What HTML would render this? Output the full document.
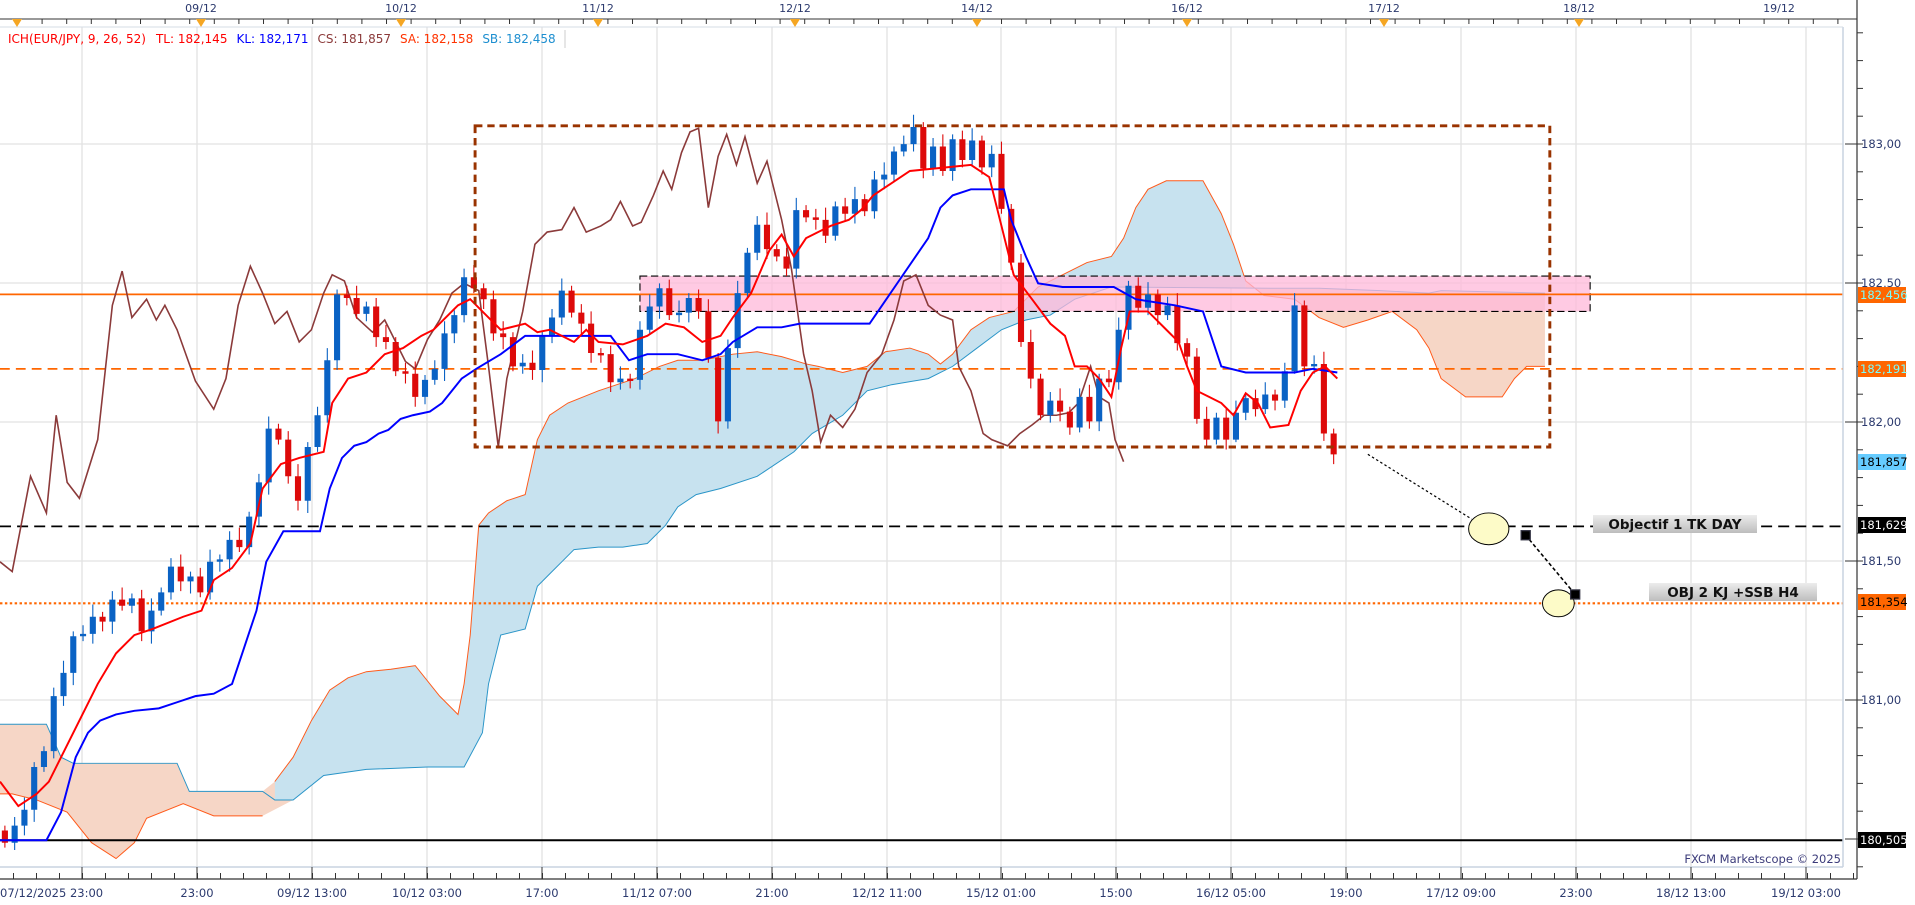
<!DOCTYPE html>
<html><head><meta charset="utf-8"><style>
html,body{margin:0;padding:0;background:#fff;width:1915px;height:905px;overflow:hidden}
svg{display:block}
text{font-family:"DejaVu Sans","Liberation Sans",sans-serif}
</style></head><body>
<svg width="1915" height="905" viewBox="0 0 1915 905" xmlns="http://www.w3.org/2000/svg">
<defs>
<clipPath id="cb"><rect x="225" y="0" width="795" height="741"/></clipPath>
<clipPath id="cs"><rect x="1020" y="0" width="300" height="741"/></clipPath>
<pattern id="rt" x="1857" y="143.5" width="6" height="27.8" patternUnits="userSpaceOnUse"><rect x="0" y="0" width="6" height="1" fill="#333"/></pattern>
<pattern id="bt" x="13" y="873" width="23" height="6" patternUnits="userSpaceOnUse"><rect x="0" y="0" width="1" height="6" fill="#333"/></pattern>
<pattern id="tt" x="17" y="19" width="24.6" height="5" patternUnits="userSpaceOnUse"><rect x="0" y="0" width="1" height="5" fill="#333"/></pattern>
<linearGradient id="g" x1="0" y1="0" x2="0" y2="1"><stop offset="0" stop-color="#ececec"/><stop offset="1" stop-color="#bdbdbd"/></linearGradient>
</defs>
<rect width="1915" height="905" fill="#fff"/>
<!-- grid -->
<g stroke="#e2e2e2" stroke-width="1.3">
<line x1="82" y1="27" x2="82" y2="867"/><line x1="197" y1="27" x2="197" y2="867"/><line x1="312" y1="27" x2="312" y2="867"/><line x1="427" y1="27" x2="427" y2="867"/><line x1="542" y1="27" x2="542" y2="867"/><line x1="657" y1="27" x2="657" y2="867"/><line x1="772" y1="27" x2="772" y2="867"/><line x1="887" y1="27" x2="887" y2="867"/><line x1="1001" y1="27" x2="1001" y2="867"/><line x1="1116" y1="27" x2="1116" y2="867"/><line x1="1231" y1="27" x2="1231" y2="867"/><line x1="1346" y1="27" x2="1346" y2="867"/><line x1="1461" y1="27" x2="1461" y2="867"/><line x1="1576" y1="27" x2="1576" y2="867"/><line x1="1691" y1="27" x2="1691" y2="867"/><line x1="1806" y1="27" x2="1806" y2="867"/>
<line x1="0" y1="144" x2="1843" y2="144"/><line x1="0" y1="283" x2="1843" y2="283"/><line x1="0" y1="422" x2="1843" y2="422"/><line x1="0" y1="561" x2="1843" y2="561"/><line x1="0" y1="700" x2="1843" y2="700"/>
</g>
<g transform="scale(1.2213)">
<!-- left salmon cloud -->
<polygon fill="#f6d6c6" points="0,593 38,593 50,620 60,625 145,625 155,648 215,648 225,640 240,635 240,655 215,668 175,668 150,658 120,670 110,690 95,703 75,690 55,665 30,655 10,650 0,650"/>
<polyline fill="none" stroke="#ff5a1a" stroke-width="0.8" points="0,650 10,650 30,655 55,665 75,690 95,703 110,690 120,670 150,658 175,668 215,668"/>
<polyline fill="none" stroke="#2a95c8" stroke-width="0.8" points="0,593 38,593 50,620 60,625 145,625 155,648 215,648 225,655 240,655"/>
<!-- main cloud -->
<polygon clip-path="url(#cb)" fill="#c7e2ef" points="225,640 240,620 255,590 270,565 285,555 300,550 320,548 340,545 360,570 375,585 380,560 385,520 392,430 400,420 415,410 430,405 440,360 450,340 465,330 490,320 505,315 520,310 540,300 555,295 575,295 600,290 620,288 640,292 660,298 670,300 690,305 710,300 725,288 745,285 760,290 770,298 780,290 795,270 810,260 830,255 850,235 870,225 890,215 910,210 920,195 930,170 940,155 955,148 985,148 1000,175 1010,200 1020,230 1035,242 1060,245 1080,260 1100,268 1120,262 1140,255 1160,270 1170,285 1180,310 1200,325 1230,325 1240,310 1250,300 1265,300 1265,240 1180,238 1170,240 1130,238 1080,236 1040,236 910,235 880,245 860,258 840,262 820,270 800,285 780,300 760,310 730,315 710,320 690,340 665,355 650,370 620,390 590,400 570,405 555,415 545,430 530,445 510,448 490,448 470,450 460,460 450,470 440,480 430,515 410,520 400,560 395,600 380,628 350,628 300,630 265,635 240,655 225,655"/>
<polygon clip-path="url(#cs)" fill="#f6d6c6" points="225,640 240,620 255,590 270,565 285,555 300,550 320,548 340,545 360,570 375,585 380,560 385,520 392,430 400,420 415,410 430,405 440,360 450,340 465,330 490,320 505,315 520,310 540,300 555,295 575,295 600,290 620,288 640,292 660,298 670,300 690,305 710,300 725,288 745,285 760,290 770,298 780,290 795,270 810,260 830,255 850,235 870,225 890,215 910,210 920,195 930,170 940,155 955,148 985,148 1000,175 1010,200 1020,230 1035,242 1060,245 1080,260 1100,268 1120,262 1140,255 1160,270 1170,285 1180,310 1200,325 1230,325 1240,310 1250,300 1265,300 1265,240 1180,238 1170,240 1130,238 1080,236 1040,236 910,235 880,245 860,258 840,262 820,270 800,285 780,300 760,310 730,315 710,320 690,340 665,355 650,370 620,390 590,400 570,405 555,415 545,430 530,445 510,448 490,448 470,450 460,460 450,470 440,480 430,515 410,520 400,560 395,600 380,628 350,628 300,630 265,635 240,655 225,655"/>
<polyline fill="none" stroke="#ff5a1a" stroke-width="0.8" points="225,640 240,620 255,590 270,565 285,555 300,550 320,548 340,545 360,570 375,585 380,560 385,520 392,430 400,420 415,410 430,405 440,360 450,340 465,330 490,320 505,315 520,310 540,300 555,295 575,295 600,290 620,288 640,292 660,298 670,300 690,305 710,300 725,288 745,285 760,290 770,298 780,290 795,270 810,260 830,255 850,235 870,225 890,215 910,210 920,195 930,170 940,155 955,148 985,148 1000,175 1010,200 1020,230 1035,242 1060,245 1080,260 1100,268 1120,262 1140,255 1160,270 1170,285 1180,310 1200,325 1230,325 1240,310 1250,300 1265,300"/>
<polyline fill="none" stroke="#2a95c8" stroke-width="0.8" points="225,655 240,655 265,635 300,630 350,628 380,628 395,600 400,560 410,520 430,515 440,480 450,470 460,460 470,450 490,448 510,448 530,445 545,430 555,415 570,405 590,400 620,390 650,370 665,355 690,340 710,320 730,315 760,310 780,300 800,285 820,270 840,262 860,258 880,245 910,235 1040,236 1080,236 1130,238 1170,240 1180,238 1265,240"/>
<!-- pink zone -->
<rect x="524" y="226" width="778" height="29" fill="#ffb8da" fill-opacity="0.75" stroke="#000" stroke-width="0.9" stroke-dasharray="6,3"/>
<!-- horizontal levels -->
<line x1="0" y1="241" x2="1509" y2="241" stroke="#ff6600" stroke-width="1.4"/>
<line x1="0" y1="302" x2="1509" y2="302" stroke="#ff6600" stroke-width="1.4" stroke-dasharray="8,5"/>
<line x1="0" y1="431" x2="1509" y2="431" stroke="#000" stroke-width="1.4" stroke-dasharray="9,5"/>
<line x1="0" y1="494" x2="1509" y2="494" stroke="#ff6600" stroke-width="1.8" stroke-dasharray="2,2"/>
<line x1="0" y1="688" x2="1509" y2="688" stroke="#000" stroke-width="1.6"/>
<!-- chikou -->
<polyline fill="none" stroke="#8b3a3a" stroke-width="1.3" points="0,460 10,468 25,390 38,420 46,340 55,395 65,408 80,360 92,250 100,222 108,260 120,245 128,262 135,250 145,270 160,312 175,335 185,310 195,250 205,218 215,240 225,265 235,255 245,280 255,270 265,240 272,225 282,230 292,260 305,272 315,262 325,282 332,296 340,302 350,278 360,262 370,240 380,232 392,238 400,300 408,366 415,310 428,255 438,200 448,190 460,188 470,170 480,190 492,185 500,180 508,165 518,185 525,182 535,160 543,140 550,155 558,125 565,108 572,105 580,170 588,128 595,110 603,135 610,112 620,150 628,132 640,180 648,220 658,290 665,320 672,362 680,340 690,350 700,335 710,305 722,290 732,262 740,230 750,225 760,250 770,258 780,262 785,300 795,320 805,355 812,360 825,365 835,355 845,348 855,340 865,340 875,338 883,330 893,300 900,325 908,330 913,360 920,378"/>
<!-- candles -->
<path fill="none" stroke="#0a62c4" stroke-width="0.9" d="M12,669V696M20,653V684M28,624V673M36,611V632M44,563V621M52,541V578M60,517V561M68,512V525M76,495V527M92,484V519M108,486V502M124,490V527M132,481V504M140,457V491M156,468V486M172,450V491M180,454V468M188,435V468M204,419V454M212,388V431M220,341V405M252,362V420M260,333V370M268,285V346M276,237V303M300,247V263M348,307V331M356,295V315M364,263V312M372,254V281M380,220V264M428,290V306M444,271V313M452,253V281M460,228V266M508,300V319M524,263V319M532,241V274M540,232V261M556,246V264M564,240V264M596,278V351M604,230V293M612,203V244M620,177V213M652,162V228M684,165V197M700,153V183M716,140V179M724,133V155M732,120V149M740,111V128M748,94V124M764,113V144M780,110V148M796,105V135M812,119V145M860,321V346M884,318V354M900,306V353M916,260V319M924,230V278M940,231V258M956,243V262M996,338V364M1012,328V362M1020,322V344M1036,313V339M1052,297V334M1060,240V306M1076,291V306"/>
<path fill="#0a62c4" d="M9.5,676h5V690h-5zM17.5,663h5V676h-5zM25.5,628h5V663h-5zM33.5,615h5V628h-5zM41.5,570h5V615h-5zM49.5,551h5V570h-5zM57.5,521h5V551h-5zM65.5,519h5V521h-5zM73.5,505h5V519h-5zM89.5,491h5V509h-5zM105.5,490h5V496h-5zM121.5,500h5V517h-5zM129.5,485h5V500h-5zM137.5,464h5V485h-5zM153.5,472h5V476h-5zM169.5,460h5V485h-5zM177.5,458h5V460h-5zM185.5,442h5V458h-5zM201.5,423h5V448h-5zM209.5,395h5V423h-5zM217.5,351h5V395h-5zM249.5,366h5V410h-5zM257.5,340h5V366h-5zM265.5,295h5V340h-5zM273.5,241h5V295h-5zM297.5,251h5V257h-5zM345.5,311h5V325h-5zM353.5,302h5V311h-5zM361.5,273h5V302h-5zM369.5,258h5V273h-5zM377.5,227h5V258h-5zM425.5,297h5V300h-5zM441.5,275h5V303h-5zM449.5,260h5V275h-5zM457.5,238h5V260h-5zM505.5,310h5V313h-5zM521.5,270h5V311h-5zM529.5,251h5V270h-5zM537.5,236h5V251h-5zM553.5,256h5V258h-5zM561.5,244h5V256h-5zM593.5,285h5V345h-5zM601.5,240h5V285h-5zM609.5,207h5V240h-5zM617.5,184h5V207h-5zM649.5,172h5V220h-5zM681.5,169h5V193h-5zM697.5,163h5V175h-5zM713.5,147h5V173h-5zM721.5,143h5V147h-5zM729.5,124h5V143h-5zM737.5,118h5V124h-5zM745.5,104h5V118h-5zM761.5,120h5V138h-5zM777.5,114h5V140h-5zM793.5,115h5V131h-5zM809.5,126h5V137h-5zM857.5,328h5V340h-5zM881.5,325h5V350h-5zM897.5,310h5V345h-5zM913.5,270h5V313h-5zM921.5,234h5V270h-5zM937.5,241h5V252h-5zM953.5,250h5V258h-5zM993.5,342h5V360h-5zM1009.5,338h5V360h-5zM1017.5,326h5V338h-5zM1033.5,323h5V335h-5zM1049.5,304h5V328h-5zM1057.5,250h5V304h-5zM1073.5,298h5V300h-5z"/>
<path fill="none" stroke="#dd0a0a" stroke-width="0.9" d="M4,676V694M84,501V517M100,481V500M116,483V525M148,454V484M164,465V489M196,432V452M228,347V364M236,353V396M244,380V418M284,234V250M292,234V261M308,244V284M316,266V286M324,276V308M332,297V314M340,296V333M388,217V240M396,232V253M404,238V279M412,263V286M420,272V304M436,287V311M468,234V260M476,249V275M484,255V297M492,285V297M500,283V321M516,306V318M548,229V262M572,237V261M580,245V297M588,289V355M628,174V212M636,200V214M644,203V226M660,168V182M668,171V188M676,170V199M692,162V181M708,159V177M756,100V146M772,110V144M788,107V137M804,111V143M820,116V175M828,167V221M836,208V284M844,270V318M852,306V344M868,318V345M876,333V356M892,315V351M908,303V317M932,227V256M948,237V266M964,240V287M972,277V300M980,285V347M988,333V366M1004,335V368M1028,319V341M1044,319V336M1068,246V308M1084,288V361M1092,351V380"/>
<path fill="#dd0a0a" d="M1.5,680h5V690h-5zM81.5,505h5V509h-5zM97.5,491h5V496h-5zM113.5,490h5V517h-5zM145.5,464h5V476h-5zM161.5,472h5V485h-5zM193.5,442h5V448h-5zM225.5,351h5V360h-5zM233.5,360h5V390h-5zM241.5,390h5V410h-5zM281.5,241h5V244h-5zM289.5,244h5V257h-5zM305.5,251h5V276h-5zM313.5,276h5V280h-5zM321.5,280h5V304h-5zM329.5,304h5V306h-5zM337.5,306h5V325h-5zM385.5,227h5V236h-5zM393.5,236h5V245h-5zM401.5,245h5V273h-5zM409.5,273h5V276h-5zM417.5,276h5V300h-5zM433.5,297h5V303h-5zM465.5,238h5V256h-5zM473.5,256h5V265h-5zM481.5,265h5V289h-5zM489.5,289h5V291h-5zM497.5,290h5V313h-5zM513.5,310h5V312h-5zM545.5,236h5V258h-5zM569.5,244h5V255h-5zM577.5,255h5V293h-5zM585.5,293h5V345h-5zM625.5,184h5V204h-5zM633.5,204h5V210h-5zM641.5,210h5V220h-5zM657.5,172h5V178h-5zM665.5,178h5V180h-5zM673.5,180h5V193h-5zM689.5,169h5V175h-5zM705.5,163h5V173h-5zM753.5,104h5V138h-5zM769.5,120h5V140h-5zM785.5,114h5V131h-5zM801.5,115h5V137h-5zM817.5,126h5V171h-5zM825.5,171h5V215h-5zM833.5,215h5V280h-5zM841.5,280h5V310h-5zM849.5,310h5V340h-5zM865.5,328h5V337h-5zM873.5,337h5V350h-5zM889.5,325h5V345h-5zM905.5,310h5V313h-5zM929.5,234h5V252h-5zM945.5,241h5V258h-5zM961.5,250h5V281h-5zM969.5,281h5V292h-5zM977.5,292h5V343h-5zM985.5,343h5V360h-5zM1001.5,342h5V360h-5zM1025.5,326h5V335h-5zM1041.5,323h5V328h-5zM1065.5,250h5V300h-5zM1081.5,298h5V355h-5zM1089.5,355h5V372h-5z"/>
<!-- kijun -->
<polyline fill="none" stroke="#0000ff" stroke-width="1.6" points="0,688 38,688 50,665 62,620 72,600 82,590 95,585 110,582 130,580 145,575 160,570 175,568 190,560 200,530 210,500 218,460 232,435 262,435 270,400 280,375 290,365 300,362 310,355 318,352 328,343 338,340 352,337 362,330 378,310 390,302 410,290 430,275 500,275 515,295 530,290 555,290 575,295 590,290 600,280 620,268 640,268 655,265 712,265 760,195 770,170 780,160 795,155 822,155 828,180 840,210 850,232 870,235 912,235 930,245 962,250 985,255 1000,300 1020,305 1060,305 1075,302 1095,305"/>
<!-- tenkan -->
<polyline fill="none" stroke="#ff0000" stroke-width="1.6" points="0,640 15,660 30,650 40,640 50,620 65,590 80,560 95,535 110,520 125,515 150,505 165,500 175,475 190,465 205,445 215,400 230,380 245,375 265,370 272,330 285,310 300,305 315,290 330,285 345,275 355,270 375,250 385,245 400,260 410,270 430,265 440,272 450,270 470,280 480,270 490,280 510,282 530,275 545,265 560,268 575,280 590,275 600,260 615,240 630,205 640,192 650,210 660,195 670,190 680,185 695,180 705,172 715,160 730,150 745,140 795,135 810,145 820,185 830,225 845,245 860,265 872,275 880,300 890,300 900,310 910,325 918,285 925,255 940,255 955,270 965,280 972,300 980,320 990,325 1000,330 1010,340 1020,322 1030,330 1040,350 1055,348 1065,320 1075,305 1085,300 1095,310"/>
<!-- brown box -->
<rect x="389" y="103" width="880" height="263" fill="none" stroke="#993300" stroke-width="2.4" stroke-dasharray="6,4"/>
<!-- projections -->
<line x1="1120" y1="372" x2="1205" y2="425" stroke="#000" stroke-width="1" stroke-dasharray="2,2"/>
<ellipse cx="1219" cy="433" rx="16.5" ry="13" fill="#fdfbc8" stroke="#000" stroke-width="0.8"/>
<line x1="1249" y1="438" x2="1290" y2="487" stroke="#000" stroke-width="1.3" stroke-dasharray="3,2"/>
<ellipse cx="1276" cy="494" rx="13" ry="11" fill="#fdfbc8" stroke="#000" stroke-width="0.8"/>
<rect x="1245.5" y="434.5" width="7.5" height="7.5" fill="#000" stroke="#334"/>
<rect x="1286" y="483" width="7.5" height="7.5" fill="#000" stroke="#334"/>
</g>
<!-- annotation labels -->
<rect x="1593" y="515" width="164" height="18" fill="url(#g)"/>
<text x="1675" y="529" text-anchor="middle" font-size="13.5" font-weight="bold" fill="#111">Objectif 1 TK DAY</text>
<rect x="1649" y="583" width="168" height="18" fill="url(#g)"/>
<text x="1733" y="597" text-anchor="middle" font-size="13.5" font-weight="bold" fill="#111">OBJ 2 KJ +SSB H4</text>
<!-- frame -->
<line x1="1843" y1="27" x2="1843" y2="867" stroke="#c9d3e0" stroke-width="1.5"/>
<line x1="0" y1="867" x2="1843" y2="867" stroke="#c9d3e0" stroke-width="1.5"/>
<line x1="1857" y1="0" x2="1857" y2="879" stroke="#333" stroke-width="1.2"/>
<line x1="0" y1="879" x2="1857" y2="879" stroke="#333" stroke-width="1.2"/>
<line x1="0" y1="19" x2="1857" y2="19" stroke="#333" stroke-width="1"/>
<line x1="0" y1="27" x2="1843" y2="27" stroke="#d6dce6" stroke-width="1"/>
<!-- ticks -->
<rect x="1857" y="30" width="6" height="845" fill="url(#rt)"/>
<rect x="0" y="873" width="1857" height="6" fill="url(#bt)"/>
<rect x="0" y="19" width="1857" height="5" fill="url(#tt)"/>
<g stroke="#333" stroke-width="1">
<line x1="1845" y1="144" x2="1857" y2="144"/><line x1="1845" y1="283" x2="1857" y2="283"/><line x1="1845" y1="422" x2="1857" y2="422"/><line x1="1845" y1="561" x2="1857" y2="561"/><line x1="1845" y1="700" x2="1857" y2="700"/><line x1="1845" y1="839" x2="1857" y2="839"/>
<line x1="82" y1="867" x2="82" y2="879"/><line x1="197" y1="867" x2="197" y2="879"/><line x1="312" y1="867" x2="312" y2="879"/><line x1="427" y1="867" x2="427" y2="879"/><line x1="542" y1="867" x2="542" y2="879"/><line x1="657" y1="867" x2="657" y2="879"/><line x1="772" y1="867" x2="772" y2="879"/><line x1="887" y1="867" x2="887" y2="879"/><line x1="1001" y1="867" x2="1001" y2="879"/><line x1="1116" y1="867" x2="1116" y2="879"/><line x1="1231" y1="867" x2="1231" y2="879"/><line x1="1346" y1="867" x2="1346" y2="879"/><line x1="1461" y1="867" x2="1461" y2="879"/><line x1="1576" y1="867" x2="1576" y2="879"/><line x1="1691" y1="867" x2="1691" y2="879"/><line x1="1806" y1="867" x2="1806" y2="879"/>
</g>
<!-- top dates -->
<g font-size="11" fill="#2c3a6e" text-anchor="middle">
<text x="201" y="12">09/12</text><text x="401" y="12">10/12</text><text x="598" y="12">11/12</text><text x="795" y="12">12/12</text><text x="977" y="12">14/12</text><text x="1187" y="12">16/12</text><text x="1384" y="12">17/12</text><text x="1579" y="12">18/12</text><text x="1779" y="12">19/12</text>
</g>
<g fill="#f5a623">
<polygon points="12,19 22,19 17,27"/><polygon points="196,19 206,19 201,27"/><polygon points="396,19 406,19 401,27"/><polygon points="593,19 603,19 598,27"/><polygon points="790,19 800,19 795,27"/><polygon points="972,19 982,19 977,27"/><polygon points="1182,19 1192,19 1187,27"/><polygon points="1379,19 1389,19 1384,27"/><polygon points="1574,19 1584,19 1579,27"/>
</g>
<!-- legend -->
<text x="8" y="43" font-size="12"><tspan fill="#ff0000">ICH(EUR/JPY, 9, 26, 52)</tspan><tspan fill="#ff0000" dx="10">TL: 182,145</tspan><tspan fill="#0000ff" dx="9">KL: 182,171</tspan><tspan fill="#8b3a3a" dx="9">CS: 181,857</tspan><tspan fill="#ff3300" dx="9">SA: 182,158</tspan><tspan fill="#1e8fd0" dx="9">SB: 182,458</tspan></text>
<line x1="565" y1="30" x2="565" y2="48" stroke="#ccc"/>
<!-- bottom labels -->
<g font-size="11.5" fill="#2c3a6e" text-anchor="middle">
<text x="0" y="897" text-anchor="start">07/12/2025 23:00</text>
<text x="197" y="897">23:00</text><text x="312" y="897">09/12 13:00</text><text x="427" y="897">10/12 03:00</text><text x="542" y="897">17:00</text><text x="657" y="897">11/12 07:00</text><text x="772" y="897">21:00</text><text x="887" y="897">12/12 11:00</text><text x="1001" y="897">15/12 01:00</text><text x="1116" y="897">15:00</text><text x="1231" y="897">16/12 05:00</text><text x="1346" y="897">19:00</text><text x="1461" y="897">17/12 09:00</text><text x="1576" y="897">23:00</text><text x="1691" y="897">18/12 13:00</text><text x="1806" y="897">19/12 03:00</text>
</g>
<text x="1841" y="863" text-anchor="end" font-size="11.5" fill="#3b3b7a">FXCM Marketscope © 2025</text>
<!-- right axis labels -->
<g font-size="11.5" fill="#2c3a6e">
<text x="1861" y="148">183,00</text><text x="1861" y="287">182,50</text><text x="1861" y="426">182,00</text><text x="1861" y="565">181,50</text><text x="1861" y="704">181,00</text>
</g>
<rect x="1858" y="287" width="48" height="16" fill="#ff6600"/><text x="1860" y="299" font-size="11.5" fill="#7ff">182,456</text>
<rect x="1858" y="361" width="48" height="16" fill="#ff6600"/><text x="1860" y="373" font-size="11.5" fill="#7ff">182,191</text>
<rect x="1858" y="454" width="48" height="16" fill="#66ccff"/><text x="1860" y="466" font-size="11.5" fill="#000">181,857</text>
<rect x="1858" y="517" width="48" height="16" fill="#000"/><text x="1860" y="529" font-size="11.5" fill="#fff">181,629</text>
<rect x="1858" y="594" width="48" height="16" fill="#ff6600"/><text x="1860" y="606" font-size="11.5" fill="#000">181,354</text>
<rect x="1858" y="832" width="48" height="16" fill="#000"/><text x="1860" y="844" font-size="11.5" fill="#fff">180,505</text>
</svg>
</body></html>
